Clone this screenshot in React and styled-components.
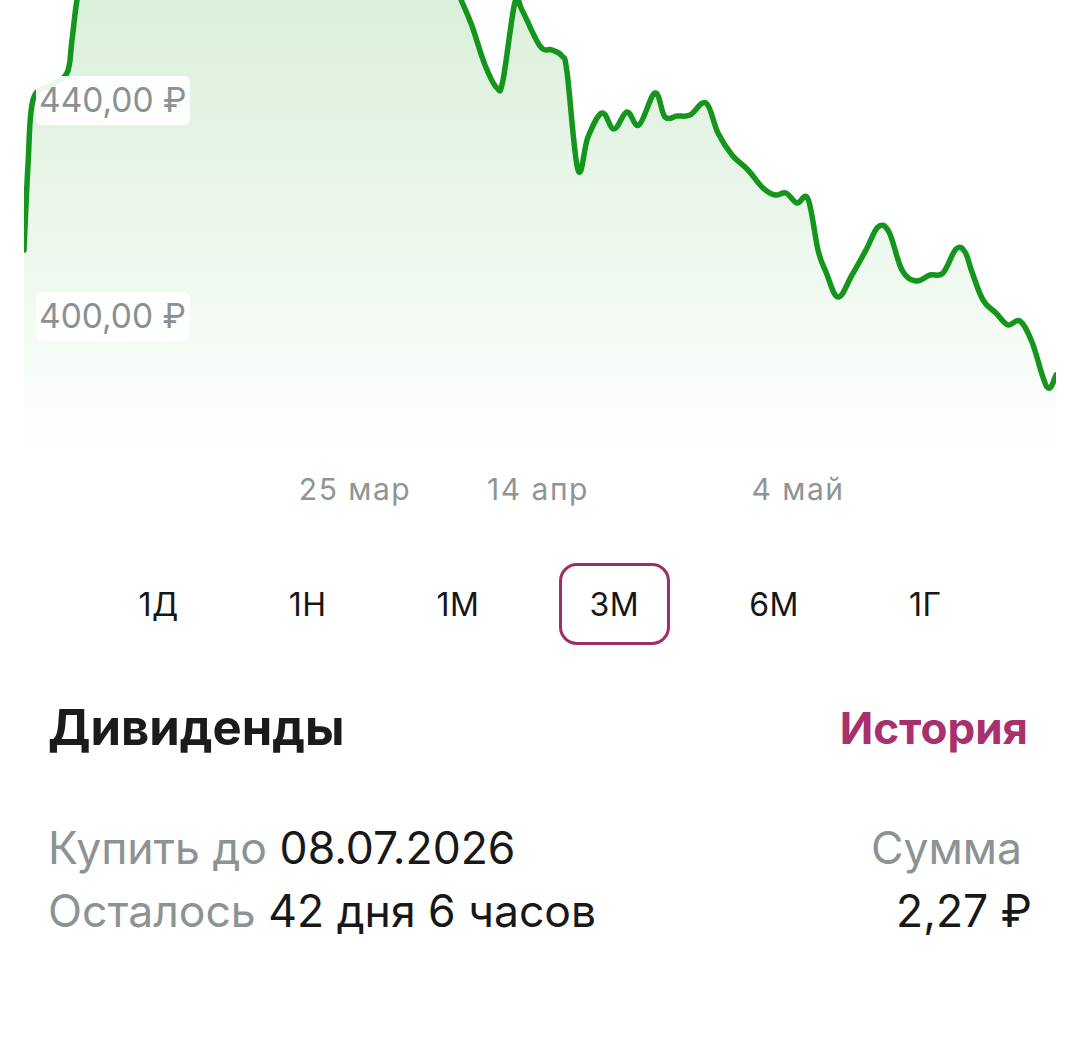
import React from "react";
import styled, { createGlobalStyle } from "styled-components";

const GlobalStyle = createGlobalStyle`
  body {
    margin: 0;
    background: #fff;
    font-family: Inter, "Liberation Sans", sans-serif;
  }
`;

const Page = styled.div`
  width: 1080px;
  height: 1046px;
  background: #fff;
  overflow: hidden;
`;

const ChartWrap = styled.div`
  position: relative;
  height: 460px;
`;

const PriceTag = styled.div`
  position: absolute;
  left: 36px;
  top: ${(p) => p.top}px;
  width: 154px;
  box-sizing: border-box;
  padding-left: 3px;
  height: 49px;
  line-height: 49px;
  background: rgba(255, 255, 255, 0.92);
  border-radius: 6px;
  color: #8b9191;
  font-size: 33.5px;
  white-space: nowrap;
`;

const Axis = styled.div`
  position: relative;
  height: 60px;
`;

const AxisLabel = styled.span`
  position: absolute;
  top: 11px;
  left: ${(p) => p.x}px;
  transform: translateX(-50%);
  color: #8f9595;
  font-size: 30px;
  letter-spacing: 1.5px;
  white-space: nowrap;
`;

const Periods = styled.div`
  display: flex;
  justify-content: center;
  gap: 48px;
  padding: 43px 0 0 0;
  height: 82px;
`;

const PeriodBox = styled.div`
  display: flex;
  align-items: center;
  justify-content: center;
  padding: 0 28px;
  height: 82px;
  box-sizing: border-box;
  border: ${(p) => (p.active ? "3px solid #9c2f69" : "3px solid transparent")};
  border-radius: 18px;
  color: #161616;
  font-size: 32px;
  letter-spacing: 0.5px;
`;

const Header = styled.div`
  display: flex;
  justify-content: space-between;
  align-items: center;
  padding: 53px 52px 0 48px;
`;

const Title = styled.h2`
  margin: 0;
  font-size: 49px;
  font-weight: 700;
  color: #1b1b1b;
`;

const Link = styled.span`
  font-size: 44px;
  font-weight: 700;
  color: #a8306c;
`;

const Info = styled.div`
  display: flex;
  justify-content: space-between;
  padding: 66px 48px 0 48px;
`;

const Col = styled.div`
  display: flex;
  flex-direction: column;
  gap: 13px;
  align-items: ${(p) => (p.right ? "flex-end" : "flex-start")};
`;

const Line = styled.div`
  font-size: 44.5px;
  line-height: 50px;
  color: #181818;
  white-space: nowrap;
  margin-right: ${(p) => p.inset || 0}px;
`;

const Muted = styled.span`
  color: #8c9393;
`;

const pts = [
  [24, 250], [28, 165], [33, 100], [50, 86], [67, 73], [72, 40], [78, -5],
  [90, -40], [200, -70], [400, -70], [452, -20], [462, 2], [472, 26],
  [485, 65], [497, 88], [503, 80], [515, 2], [522, 10], [540, 46],
  [552, 50], [562, 56], [567, 72], [578, 170], [588, 137], [602, 113],
  [614, 129], [627, 112], [639, 125], [655, 93], [665, 117], [677, 116],
  [690, 115], [706, 103], [718, 133], [732, 155], [748, 170], [763, 188],
  [775, 195], [786, 193], [797, 203], [808, 199], [818, 250], [826, 272],
  [838, 297], [852, 275], [866, 250], [878, 227], [889, 232], [902, 270],
  [916, 281], [930, 275], [943, 273], [956, 249], [965, 252], [972, 272],
  [983, 300], [996, 313], [1008, 325], [1020, 321], [1032, 342],
  [1047, 387], [1056, 375],
];

// catmull-rom -> bezier
const smooth = (p) => {
  let d = `M${p[0][0]},${p[0][1]}`;
  for (let i = 0; i < p.length - 1; i++) {
    const p0 = p[i - 1] || p[i];
    const p1 = p[i];
    const p2 = p[i + 1];
    const p3 = p[i + 2] || p2;
    const t = 0.18;
    const c1x = p1[0] + (p2[0] - p0[0]) * t;
    const c1y = p1[1] + (p2[1] - p0[1]) * t;
    const c2x = p2[0] - (p3[0] - p1[0]) * t;
    const c2y = p2[1] - (p3[1] - p1[1]) * t;
    d += ` C${c1x.toFixed(1)},${c1y.toFixed(1)} ${c2x.toFixed(1)},${c2y.toFixed(1)} ${p2[0]},${p2[1]}`;
  }
  return d;
};

const linePath = smooth(pts);
const areaPath = `${linePath} L1056,460 L24,460 Z`;

const Chart = () => (
  <svg width="1080" height="460" viewBox="0 0 1080 460" style={{ display: "block" }}>
    <defs>
      <linearGradient id="fill" x1="0" y1="0" x2="0" y2="1">
        <stop offset="0" stopColor="#1fa31f" stopOpacity="0.19" />
        <stop offset="0.55" stopColor="#1fa31f" stopOpacity="0.09" />
        <stop offset="1" stopColor="#1fa31f" stopOpacity="0" />
      </linearGradient>
      <clipPath id="clip">
        <rect x="24" y="0" width="1032" height="460" />
      </clipPath>
    </defs>
    <g clipPath="url(#clip)">
      <path d={areaPath} fill="url(#fill)" />
      <path
        d={linePath}
        fill="none"
        stroke="#14951c"
        strokeWidth="5.5"
        strokeLinejoin="round"
        strokeLinecap="round"
      />
    </g>
  </svg>
);

const periods = ["1Д", "1Н", "1М", "3М", "6М", "1Г"];

export default function App() {
  return (
    <Page>
      <GlobalStyle />
      <ChartWrap>
        <Chart />
        <PriceTag top={76}>440,00 ₽</PriceTag>
        <PriceTag top={292}>400,00 ₽</PriceTag>
      </ChartWrap>
      <Axis>
        <AxisLabel x={355}>25 мар</AxisLabel>
        <AxisLabel x={538}>14 апр</AxisLabel>
        <AxisLabel x={798}>4 май</AxisLabel>
      </Axis>
      <Periods>
        {periods.map((p) => (
          <PeriodBox key={p} active={p === "3М"}>
            {p}
          </PeriodBox>
        ))}
      </Periods>
      <Header>
        <Title>Дивиденды</Title>
        <Link>История</Link>
      </Header>
      <Info>
        <Col>
          <Line>
            <Muted>Купить до</Muted> 08.07.2026
          </Line>
          <Line>
            <Muted>Осталось</Muted> 42 дня 6 часов
          </Line>
        </Col>
        <Col right>
          <Line inset={10}>
            <Muted>Сумма</Muted>
          </Line>
          <Line>2,27 ₽</Line>
        </Col>
      </Info>
    </Page>
  );
}
